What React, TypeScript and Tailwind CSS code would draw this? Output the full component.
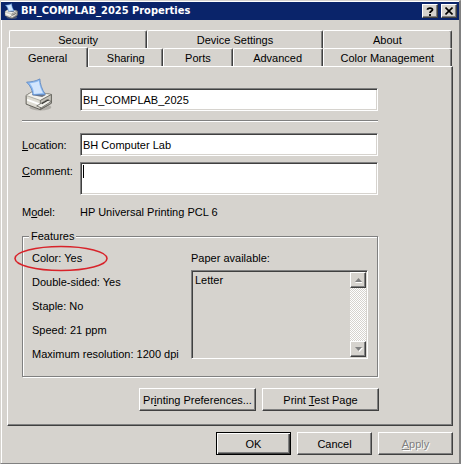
import { useState } from 'react'
import type { ReactNode } from 'react'
import clsx from 'clsx'

const FEATURES = ['Color: Yes', 'Double-sided: Yes', 'Staple: No', 'Speed: 21 ppm', 'Maximum resolution: 1200 dpi']

const raised =
  'border border-t-white border-l-white border-r-[#404040] border-b-[#404040] bg-[#d6d3ce] shadow-[inset_-1px_-1px_0_#808080]'
const sunken =
  'border border-t-[#808080] border-l-[#808080] border-r-white border-b-white shadow-[inset_1px_1px_0_#404040,inset_-1px_-1px_0_#d6d3ce]'
const field = `${sunken} block min-w-0 flex-1 rounded-none bg-white px-[2px] outline-none`

function PrinterIcon({ className }: { className?: string }) {
  return (
    <svg viewBox="0 0 30 36" className={className} aria-hidden="true">
      <ellipse cx="17" cy="32" rx="12" ry="3.500" fill="#8b8982" opacity=".5" />
      <path d="M1.500 19 9 14.500l20 3.500v9.500L17 34.500 1.500 28.500z" fill="#dedcd3" stroke="#55534e" />
      <path d="M1.500 19 9 14.500l20 3.500-12 6.500z" fill="#f4f3ed" stroke="#9a988f" strokeWidth=".8" />
      <path d="M17 24.500v9.500l12-6.500V18z" fill="#c2c0b8" stroke="#5b5954" strokeWidth=".8" />
      <path d="M7.500 18.500 10 16.500l13 2-4 2.300z" fill="#6f7684" />
      <path d="M2 4.500C7 4.300 12 3.500 16.500 1c0 5 2.500 12 6 17L9 18.500C8.500 14 6.500 8.500 2 4.500z" fill="#8fbdf4" stroke="#4f7dbd" strokeWidth=".8" />
      <path d="M5.500 5.700c4 0 7-.7 10-2.300.2 4.400 2 9 4.300 13L10 17.500C10 13 8.500 9 5.500 5.700z" fill="#d3e6fd" />
      <path d="m2.500 22.500 13.500 5v2.200L2.500 24.700z" fill="#fff" />
      <path d="m13 30.500 11-6.500 5 1.500-11 7z" fill="#f1f0ea" stroke="#5b5954" strokeWidth=".8" />
      <path d="m18.500 28 7.500-4.300" stroke="#33322f" strokeWidth="1.200" />
    </svg>
  )
}

interface TabProps {
  label: string
  active: string
  onSelect: (label: string) => void
}

function Tab({ label, active, onSelect }: TabProps) {
  const selected = active === label
  return (
    <button
      type="button"
      role="tab"
      aria-selected={selected}
      onClick={() => onSelect(label)}
      className={clsx(
        'rounded-t-[2px] border border-b-0 border-t-white border-l-white border-r-[#404040] bg-[#d6d3ce] text-center shadow-[inset_-1px_0_0_#808080]',
        selected ? 'relative z-10 -mt-px -mb-px h-5' : 'h-[18px]',
      )}
    >
      {label}
    </button>
  )
}

function PushButton({ children, className, disabled }: { children: ReactNode; className?: string; disabled?: boolean }) {
  return (
    <button
      type="button"
      disabled={disabled}
      className={clsx(
        raised,
        'h-[23px] whitespace-nowrap',
        disabled && 'text-[#808080] [text-shadow:1px_1px_0_#fff]',
        className,
      )}
    >
      {children}
    </button>
  )
}

function ScrollButton({ down }: { down?: boolean }) {
  return (
    <button
      type="button"
      aria-label={down ? 'Scroll down' : 'Scroll up'}
      className={`${raised} flex h-4 w-4 items-center justify-center`}
    >
      <svg width="9" height="6" viewBox="0 0 9 6" aria-hidden="true">
        <path d={down ? 'M2 2h7L5.500 6z' : 'M1 5h7v1H2z'} fill="#fff" />
        <path d={down ? 'M1 1h7L4.500 5z' : 'M1 5h7L4.500 1z'} fill="#808080" />
      </svg>
    </button>
  )
}

export default function App() {
  const [tab, setTab] = useState('General')
  const [name, setName] = useState('BH_COMPLAB_2025')
  const [location, setLocation] = useState('BH Computer Lab')
  const [comment, setComment] = useState('')

  return (
    <div className="min-h-screen border-t border-r-2 border-b border-l border-t-[#d6d3ce] border-r-[#808080] border-b-[#808080] border-l-[#d6d3ce] bg-[#d6d3ce] font-['Liberation_Sans',Arial,sans-serif] text-[11px] leading-[14px] text-black shadow-[inset_1px_1px_0_#fff]">
      <header className="mt-px flex h-[18px] items-center gap-[3px] bg-[#0a246a] pr-[2px] pl-[3px]">
        <PrinterIcon className="h-4 w-[14px]" />
        <h1 className="flex-1 font-['DejaVu_Sans_Condensed','DejaVu_Sans',sans-serif] text-[11px] font-bold text-white">
          BH_COMPLAB_2025 Properties
        </h1>
        <button type="button" aria-label="Help" className={`${raised} flex h-[14px] w-4 items-center justify-center`}>
          <svg width="8" height="9" viewBox="0 0 8 9" fill="none" stroke="#000" strokeWidth="1.800" aria-hidden="true">
            <path d="M1.500 2.700C1.500.5 6.500.5 6.500 2.700 6.500 4 4 4 4 6M4 7v2" />
          </svg>
        </button>
        <button type="button" aria-label="Close" className={`${raised} flex h-[14px] w-4 items-center justify-center`}>
          <svg width="8" height="8" viewBox="0 0 8 8" stroke="#000" strokeWidth="1.600" aria-hidden="true">
            <path d="m.5.5 7 7M7.500.5l-7 7" />
          </svg>
        </button>
      </header>

      <main className="px-[6px] pt-[10px] pb-2">
        <div role="tablist" aria-label="Printer properties">
          <div className="grid grid-cols-[138fr_175fr_129fr] pr-px pl-[2px]">
            {['Security', 'Device Settings', 'About'].map((t) => (
              <Tab key={t} label={t} active={tab} onSelect={setTab} />
            ))}
          </div>
          <div className="grid grid-cols-[81fr_75fr_69fr_90fr_129fr] pr-px">
            {['General', 'Sharing', 'Ports', 'Advanced', 'Color Management'].map((t) => (
              <Tab key={t} label={t} active={tab} onSelect={setTab} />
            ))}
          </div>
        </div>

        <section role="tabpanel" aria-label={tab} className={`${raised} pt-[11px] pr-[74px] pb-[14px] pl-[14px]`}>
          <div className="flex items-end">
            <div className="w-[58px]">
              <PrinterIcon className="ml-[2px] h-[33px] w-[29px]" />
            </div>
            <input
              aria-label="Printer name"
              value={name}
              onChange={(e) => setName(e.target.value)}
              className={`${field} h-[23px]`}
            />
          </div>

          <hr className="mt-[9px] h-[2px] border-t border-b border-t-[#808080] border-b-white" />

          <div className="mt-[11px] flex items-center">
            <label htmlFor="location" className="w-[58px]">
              <u>L</u>ocation:
            </label>
            <input
              id="location"
              value={location}
              onChange={(e) => setLocation(e.target.value)}
              className={`${field} h-[23px]`}
            />
          </div>
          <div className="relative mt-[6px] flex items-start">
            <label htmlFor="comment" className="w-[58px] pt-[2px]">
              <u>C</u>omment:
            </label>
            <textarea
              id="comment"
              value={comment}
              onChange={(e) => setComment(e.target.value)}
              className={`${field} h-[33px] resize-none pt-[3px]`}
            />
            <span className="absolute top-[3px] left-[61px] h-[13px] w-px bg-black" />
          </div>
          <div className="mt-[10px] flex">
            <span className="w-[58px]">
              M<u>o</u>del:
            </span>
            <span>HP Universal Printing PCL 6</span>
          </div>

          <fieldset className="mt-[10px] min-w-0 border border-[#808080] px-[9px] pb-[15px] shadow-[1px_1px_0_#fff,inset_1px_1px_0_#fff]">
            <legend className="-ml-[3px] bg-[#d6d3ce] px-[2px]">Features</legend>
            <div className="flex pt-2">
              <ul className="flex w-[159px] shrink-0 flex-col gap-[10px]">
                {FEATURES.map((f, i) => (
                  <li key={f} className="relative whitespace-nowrap">
                    {f}
                    {i === 0 && (
                      <svg
                        width="94"
                        height="27"
                        viewBox="0 0 94 27"
                        className="absolute -top-[6px] -left-[18px]"
                        aria-hidden="true"
                      >
                        <ellipse cx="47" cy="13.500" rx="46" ry="12" fill="none" stroke="#d8232a" strokeWidth="1.600" />
                      </svg>
                    )}
                  </li>
                ))}
              </ul>
              <div className="min-w-0 flex-1">
                <p>Paper available:</p>
                <div className={`${sunken} mt-[5px] flex h-[89px] p-px`}>
                  <ul className="flex-1 px-[2px] py-px">
                    <li>Letter</li>
                  </ul>
                  <div className="flex w-4 flex-col justify-between bg-[repeating-conic-gradient(#ffffff_0_25%,#d6d3ce_0_50%)] bg-[length:2px_2px]">
                    <ScrollButton />
                    <ScrollButton down />
                  </div>
                </div>
              </div>
            </div>
          </fieldset>

          <div className="-mr-px mt-[11px] flex justify-end gap-[6px]">
            <PushButton className="w-[117px]">
              Pr<u>i</u>nting Preferences...
            </PushButton>
            <PushButton className="w-[117px]">
              Print <u>T</u>est Page
            </PushButton>
          </div>
        </section>

        <footer className="mt-[6px] flex justify-end gap-[6px]">
          <button
            type="button"
            className="h-[23px] w-[75px] border border-black bg-[#d6d3ce] shadow-[inset_1px_1px_0_#fff,inset_-1px_-1px_0_#404040,inset_-2px_-2px_0_#808080]"
          >
            OK
          </button>
          <PushButton className="w-[75px]">Cancel</PushButton>
          <PushButton className="w-[75px]" disabled>
            <u>A</u>pply
          </PushButton>
        </footer>
      </main>
    </div>
  )
}
